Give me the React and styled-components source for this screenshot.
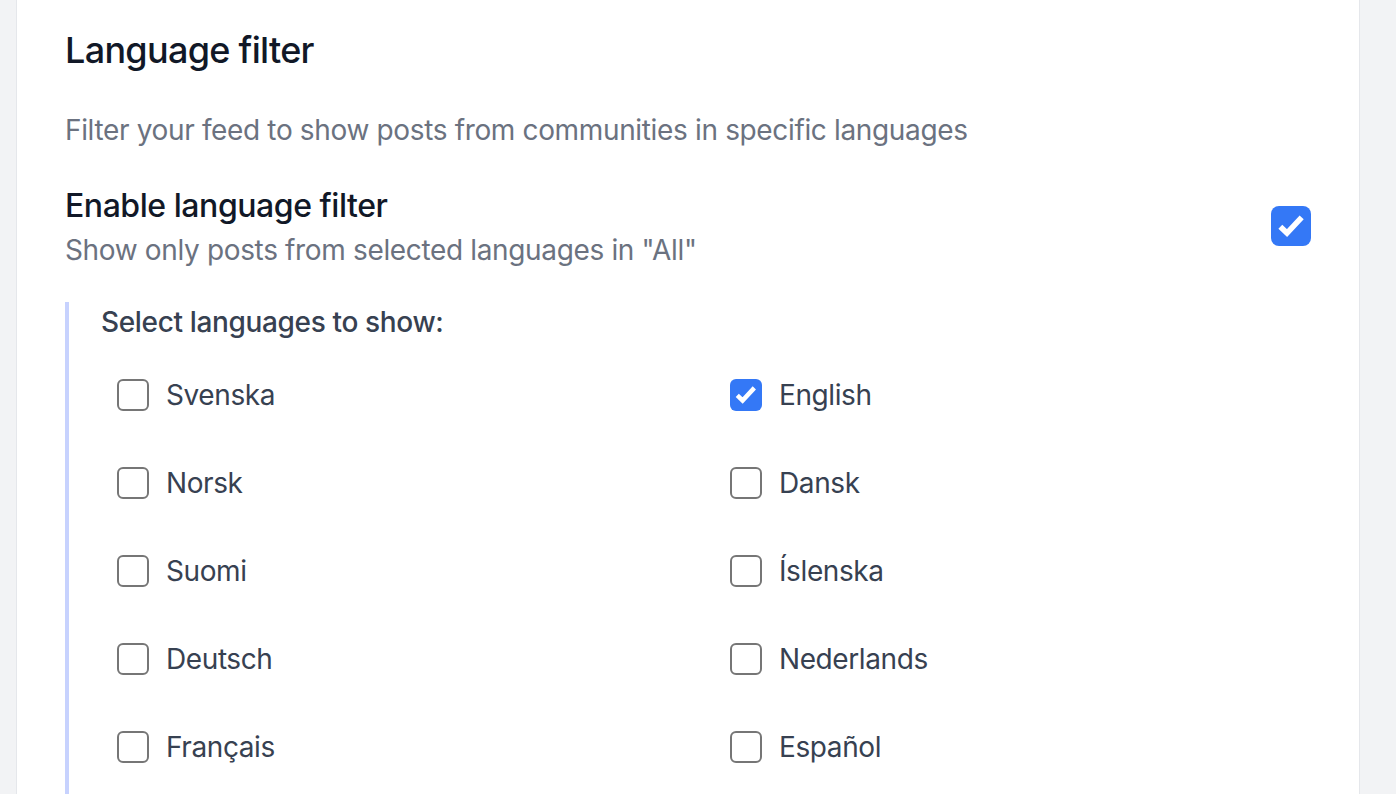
import React from 'react'
import styled, { createGlobalStyle } from 'styled-components'

const GlobalStyle = createGlobalStyle`
  html, body {
    margin: 0;
    padding: 0;
    background: #f2f3f5;
    overflow: hidden;
  }
  body {
    font-family: Inter, "Noto Sans", "Liberation Sans", sans-serif;
    -webkit-font-smoothing: antialiased;
  }
`

const Page = styled.div`
  padding-left: 16px;
  height: 794px;
`

const Card = styled.section`
  width: 1344px;
  box-sizing: border-box;
  background: #fff;
  border-left: 1px solid #e5e7eb;
  border-right: 1px solid #e5e7eb;
  padding: 22px 48px 0 48px;
  height: 100%;
`

const Title = styled.h2`
  margin: 0;
  font-size: 36px;
  line-height: 56px;
  font-weight: 500;
  color: #111827;
  letter-spacing: -0.7px;
`

const Desc = styled.p`
  margin: 32px 0 0;
  font-size: 28px;
  line-height: 40px;
  color: #6b7280;
  letter-spacing: -0.35px;
`

const SettingRow = styled.div`
  margin-top: 32px;
  display: flex;
  align-items: center;
  justify-content: space-between;
`

const SettingName = styled.div`
  font-size: 32px;
  line-height: 48px;
  font-weight: 500;
  color: #111827;
  letter-spacing: -0.45px;
`

const SettingHint = styled.div`
  font-size: 28px;
  line-height: 40px;
  color: #6b7280;
  letter-spacing: -0.35px;
`

const Box = styled.span`
  flex: none;
  box-sizing: border-box;
  width: ${({ size }) => size}px;
  height: ${({ size }) => size}px;
  border-radius: ${({ size }) => (size > 36 ? 8 : 6)}px;
  border: ${({ checked }) => (checked ? 'none' : '2px solid #767676')};
  background: ${({ checked }) => (checked ? '#3478f6' : '#fff')};
  display: flex;
  align-items: center;
  justify-content: center;
  svg {
    width: 80%;
    height: 80%;
  }
`

const Group = styled.div`
  margin-top: 32px;
  border-left: 4px solid #c7d2fe;
  padding-left: 32px;
  padding-bottom: 40px;
`

const GroupLabel = styled.div`
  font-size: 28px;
  line-height: 40px;
  font-weight: 500;
  color: #374151;
  letter-spacing: -0.35px;
`

const Grid = styled.div`
  margin-top: 25px;
  margin-left: 16px;
  display: grid;
  grid-template-columns: 1fr 1fr;
  column-gap: 32px;
  row-gap: 32px;
`

const Option = styled.label`
  display: flex;
  align-items: center;
  gap: 17px;
  height: 56px;
  font-size: 28px;
  color: #374151;
  letter-spacing: -0.4px;
`

const Check = ({ checked, size }) => (
  <Box checked={checked} size={size}>
    {checked && (
      <svg viewBox="0 0 24 24" fill="none">
        <path d="M4 12.5l5 4.8L20 5.5" stroke="#fff" strokeWidth="4.2" strokeLinecap="butt" strokeLinejoin="miter" />
      </svg>
    )}
  </Box>
)

const languages = [
  ['Svenska', false],
  ['English', true],
  ['Norsk', false],
  ['Dansk', false],
  ['Suomi', false],
  ['Íslenska', false],
  ['Deutsch', false],
  ['Nederlands', false],
  ['Français', false],
  ['Español', false],
]

export default function App() {
  return (
    <Page>
      <GlobalStyle />
      <Card>
        <Title>Language filter</Title>
        <Desc>Filter your feed to show posts from communities in specific languages</Desc>
        <SettingRow>
          <div>
            <SettingName>Enable language filter</SettingName>
            <SettingHint>Show only posts from selected languages in "All"</SettingHint>
          </div>
          <Check checked size={40} />
        </SettingRow>
        <Group>
          <GroupLabel>Select languages to show:</GroupLabel>
          <Grid>
            {languages.map(([name, on]) => (
              <Option key={name}>
                <Check checked={on} size={32} />
                {name}
              </Option>
            ))}
          </Grid>
        </Group>
      </Card>
    </Page>
  )
}
